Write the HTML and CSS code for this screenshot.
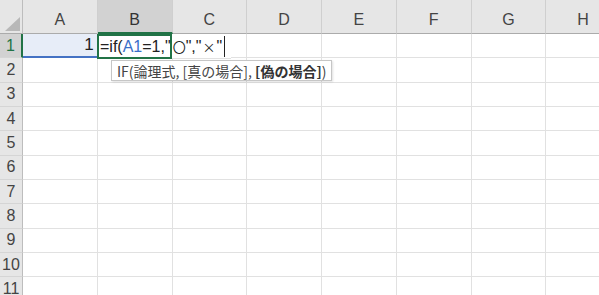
FILE: index.html
```html
<!DOCTYPE html>
<html lang="ja">
<head>
  <meta charset="UTF-8">
  <title>Sheet1</title>
  <link rel="stylesheet" href="styles.css">
</head>
<body>
  <div class="sheet">
    <div class="grid">
      <div class="corner">
        <svg width="22" height="33" viewBox="0 0 22 33"><polygon points="20,17 20,31 5,31" fill="#b8b8b8"/></svg>
      </div>
      <div class="col-head">A</div>
      <div class="col-head selected">B</div>
      <div class="col-head">C</div>
      <div class="col-head">D</div>
      <div class="col-head">E</div>
      <div class="col-head">F</div>
      <div class="col-head">G</div>
      <div class="col-head">H</div>

      <div class="row-head selected">1</div>
      <div class="cell ref num">1</div>
      <div class="cell active"></div>
      <div class="cell"></div><div class="cell"></div><div class="cell"></div><div class="cell"></div><div class="cell"></div><div class="cell"></div>
    </div>

    <div class="editor"><span>=if(<span class="ref-text">A1</span>=1,"<span class="wide circle">〇</span>","<span class="wide cross">×</span>"</span><span class="caret"></span></div>
    <div class="tip"><span>IF(論理式, [真の場合], <b>[偽の場合]</b>)</span></div>
  </div>
  <script>
    // fill rows 2-11 with empty cells
    const grid = document.querySelector('.grid');
    for (let r = 2; r <= 11; r++) {
      const head = document.createElement('div');
      head.className = 'row-head';
      head.textContent = r;
      grid.appendChild(head);
      for (let c = 0; c < 8; c++) {
        const cell = document.createElement('div');
        cell.className = 'cell';
        grid.appendChild(cell);
      }
    }
  </script>
</body>
</html>
```

FILE: styles.css
```css
body {
  margin: 0;
  background: #fff;
  font-family: 'Noto Sans CJK JP', 'Noto Sans', sans-serif;
  color: #222;
  overflow: hidden;
}
.sheet {
  position: relative;
  width: 599px;
  height: 295px;
  overflow: hidden;
}
.grid {
  display: grid;
  grid-template-columns: 23px repeat(8, 74.75px);
  grid-template-rows: 34px repeat(11, 24.35px);
  width: 621px;
}
.grid > div {
  box-sizing: border-box;
}
.corner {
  background: #e6e6e6;
  border-right: 1px solid #bdbdbd;
  border-bottom: 1px solid #ababab;
}
.corner svg {
  display: block;
}
.col-head {
  display: flex;
  align-items: center;
  justify-content: center;
  padding-top: 7px;
  background: #e6e6e6;
  border-right: 1px solid #cfcfcf;
  border-bottom: 1px solid #ababab;
  font-family: 'Liberation Sans', Arial, sans-serif;
  font-size: 16px;
  color: #444;
}
.col-head.selected {
  background: #d2d2d2;
  border-bottom: 2px solid #217346;
  color: #333;
}
.row-head {
  display: flex;
  align-items: center;
  justify-content: center;
  background: #e6e6e6;
  border-right: 1px solid #bdbdbd;
  border-bottom: 1px solid #d5d5d5;
  font-family: 'Liberation Sans', Arial, sans-serif;
  font-size: 16px;
  color: #444;
}
.row-head.selected {
  background: #d2d2d2;
  border-right: 2px solid #217346;
  color: #217346;
}
.cell {
  border-right: 1px solid #e1e1e1;
  border-bottom: 1px solid #e1e1e1;
}
.cell.ref {
  background: #e7edf8;
  border-bottom: 2px solid #4472c4;
}
.num {
  display: flex;
  align-items: center;
  justify-content: flex-end;
  padding-right: 3px;
  font-family: 'Liberation Sans', Arial, sans-serif;
  font-size: 17px;
  color: #222;
}
.editor {
  position: absolute;
  z-index: 1;
  left: 97px;
  top: 34px;
  width: 134px;
  height: 25px;
  box-sizing: border-box;
  padding-left: 3px;
  background: #fff;
  border-bottom: 1px solid #e1e1e1;
  display: flex;
  align-items: center;
  font-family: 'Liberation Sans', Arial, sans-serif;
  font-size: 16px;
  color: #222;
  white-space: nowrap;
}
.editor::before {
  content: '';
  position: absolute;
  z-index: -1;
  left: 0;
  top: 0;
  width: 75px;
  height: 25px;
  box-sizing: border-box;
  border: 2px solid #217346;
}
.wide {
  font-family: 'Noto Sans CJK JP', sans-serif;
  font-size: 13px;
}
.wide.circle {
  padding-left: 2px;
}
.wide.cross {
  padding: 0 1px;
}
.ref-text {
  color: #3a6fc9;
}
.caret {
  display: inline-block;
  width: 1px;
  height: 21px;
  margin-left: 2px;
  background: #222;
}
.tip {
  position: absolute;
  left: 111px;
  top: 60px;
  height: 21px;
  padding: 0 5px;
  box-sizing: border-box;
  background: #fff;
  border: 1px solid #c6c6c6;
  box-shadow: 1px 1px 2px rgba(0, 0, 0, 0.12);
  display: flex;
  align-items: center;
  font-size: 14px;
  color: #444;
  white-space: nowrap;
}
.tip b {
  color: #333;
}
```
